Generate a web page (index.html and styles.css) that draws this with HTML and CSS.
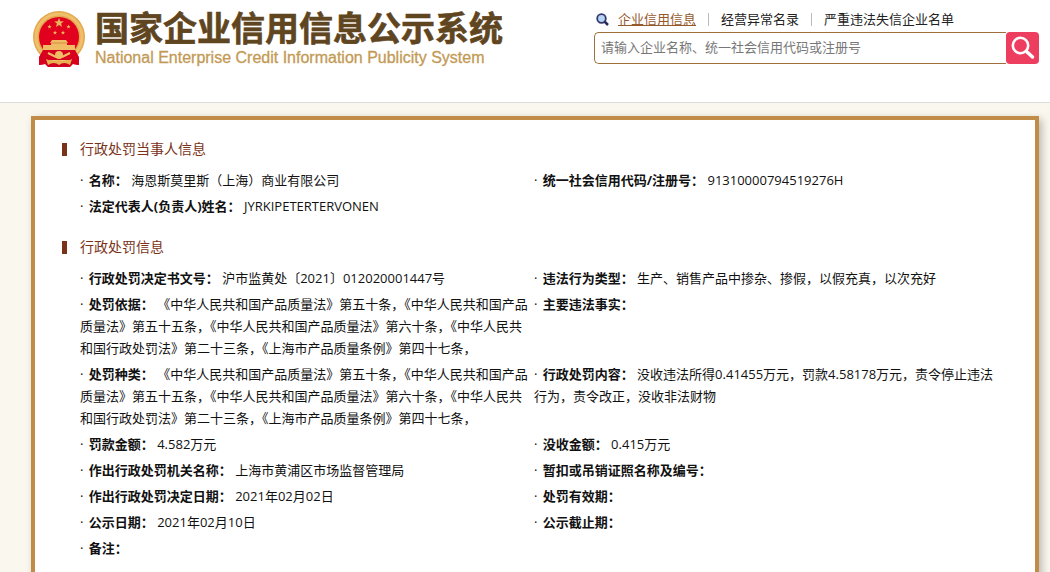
FILE: index.html
```html
<!DOCTYPE html>
<html lang="zh-CN">
<head>
    <meta charset="UTF-8">
    <meta name="viewport" content="width=device-width, initial-scale=1.0">
    <title>国家企业信用信息公示系统</title>
    <link rel="stylesheet" href="styles.css">
</head>
<body>
    <header class="header">
        <div class="logo">
            <svg class="emblem" viewBox="0 0 52 56" aria-hidden="true">
                <path d="M8 38 L6 54 L12 53 L15 56 L37 56 L40 53 L46 54 L44 38 Z" fill="#d2001f"/>
                <circle cx="26" cy="26" r="26" fill="#e3a84e"/>
                <circle cx="26" cy="26" r="23" fill="none" stroke="#efc06c" stroke-width="3"/>
                <circle cx="26" cy="26" r="20" fill="#e2001f"/>
                <path d="M26 7 l1.300 3.200 3.500 .2 -2.700 2.200 .9 3.400 -3 -1.900 -3 1.900 .9 -3.400 -2.700 -2.200 3.500 -.2z" fill="#e9b35a"/>
                <g fill="#e9b35a">
                    <path id="star" d="M16.500 13.500 l.6 1.400 1.500 .1 -1.200 1 .4 1.500 -1.300 -.8 -1.300 .8 .4 -1.500 -1.200 -1 1.500 -.1z"/>
                    <use href="#star" x="19"/>
                    <use href="#star" x="5.500" y="6"/>
                    <use href="#star" x="13.500" y="6"/>
                </g>
                <path d="M19 29 H33 L35 32 H34 V34 H42 V39 H10 V34 H18 V32 H17 Z" fill="#f0bd66"/>
                <path d="M18 32 H34" stroke="#d98a3a" stroke-width="1"/>
                <path d="M10 39 H42 L46 46 V54 L40 53 L37 49 H15 L12 53 L6 54 V46 Z" fill="#d8001f"/>
                <circle cx="26" cy="44" r="4" fill="#f0bd66"/>
                <path d="M13 48 Q20 52 26 49 Q32 52 39 48 L37 54 Q31 50 26 54 Q21 50 15 54 Z" fill="#e9ae50"/>
                <path d="M15 42 L23 46 M37 42 L29 46" stroke="#f0bd66" stroke-width="2"/>
            </svg>
            <div>
                <h1>国家企业信用信息公示系统</h1>
                <p class="subtitle">National Enterprise Credit Information Publicity System</p>
            </div>
        </div>
        <div class="search">
            <nav class="tabs">
                <svg class="tab-icon" viewBox="0 0 13 13" aria-hidden="true">
                    <path d="M8.500 8.500 L12 12" stroke="#2b2b5c" stroke-width="2.500"/>
                    <circle cx="5.500" cy="5.500" r="4.300" fill="#b5d5f0" stroke="#33386e" stroke-width="1.800"/>
                </svg>
                <a href="#" class="active">企业信用信息</a>
                <span class="line"></span>
                <a href="#">经营异常名录</a>
                <span class="line"></span>
                <a href="#">严重违法失信企业名单</a>
            </nav>
            <form class="search-box">
                <input type="text" aria-label="企业查询" placeholder="请输入企业名称、统一社会信用代码或注册号">
                <button type="submit" aria-label="搜索">
                    <svg viewBox="0 0 24 24" aria-hidden="true">
                        <circle cx="9.500" cy="9.500" r="7.700" fill="none" stroke="#fff" stroke-width="2.600"/>
                        <path d="M15.500 15.500 L21.500 21" stroke="#fff" stroke-width="3.500" stroke-linecap="round"/>
                    </svg>
                </button>
            </form>
        </div>
    </header>

    <main class="container">
        <section>
            <h2>行政处罚当事人信息</h2>
            <div class="info">
                <p>· <b>名称：</b> 海恩斯莫里斯（上海）商业有限公司</p>
                <p>· <b>统一社会信用代码/注册号：</b> 91310000794519276H</p>
                <p>· <b>法定代表人(负责人)姓名：</b> JYRKIPETERTERVONEN</p>
            </div>
        </section>
        <section>
            <h2>行政处罚信息</h2>
            <div class="info">
                <p>· <b>行政处罚决定书文号：</b> 沪市监黄处〔2021〕012020001447号</p>
                <p>· <b>违法行为类型：</b> 生产、销售产品中掺杂、掺假，以假充真，以次充好</p>
                <p>· <b>处罚依据：</b> 《中华人民共和国产品质量法》第五十条，《中华人民共和国产品质量法》第五十五条，《中华人民共和国产品质量法》第六十条，《中华人民共和国行政处罚法》第二十三条，《上海市产品质量条例》第四十七条，</p>
                <p>· <b>主要违法事实：</b></p>
                <p>· <b>处罚种类：</b> 《中华人民共和国产品质量法》第五十条，《中华人民共和国产品质量法》第五十五条，《中华人民共和国产品质量法》第六十条，《中华人民共和国行政处罚法》第二十三条，《上海市产品质量条例》第四十七条，</p>
                <p>· <b>行政处罚内容：</b> 没收违法所得0.41455万元，罚款4.58178万元，责令停止违法行为，责令改正，没收非法财物</p>
                <p>· <b>罚款金额：</b> 4.582万元</p>
                <p>· <b>没收金额：</b> 0.415万元</p>
                <p>· <b>作出行政处罚机关名称：</b> 上海市黄浦区市场监督管理局</p>
                <p>· <b>暂扣或吊销证照名称及编号：</b></p>
                <p>· <b>作出行政处罚决定日期：</b> 2021年02月02日</p>
                <p>· <b>处罚有效期：</b></p>
                <p>· <b>公示日期：</b> 2021年02月10日</p>
                <p>· <b>公示截止期：</b></p>
                <p>· <b>备注：</b></p>
            </div>
        </section>
    </main>
</body>
</html>
```
FILE: styles.css
```css
* {
    box-sizing: border-box;
    margin: 0;
    padding: 0;
}
body {
    display: flex;
    flex-direction: column;
    min-height: 100vh;
    font-family: "Open Sans", "Noto Sans CJK SC", sans-serif;
    font-size: 13px;
    line-height: 22px;
    color: #111;
    background: #faf7ee;
}
.header {
    display: flex;
    justify-content: space-between;
    padding: 8px 11px 34px 33px;
    background: #fff;
    border-bottom: 1px solid #ddd;
}
.logo {
    display: flex;
    gap: 10px;
}
.emblem {
    width: 52px;
    height: 56px;
    margin-top: 3px;
}
h1 {
    font-size: 34px;
    line-height: 40px;
    color: #5f4520;
    -webkit-text-stroke: 0.6px #5f4520;
    white-space: nowrap;
}
.subtitle {
    font-family: "Liberation Sans", Arial, sans-serif;
    font-size: 16px;
    line-height: 20px;
    color: #c39a55;
    -webkit-text-stroke: 0.3px #c39a55;
    white-space: nowrap;
}
.search {
    width: 445px;
}
.tabs {
    display: flex;
    align-items: center;
    height: 24px;
    padding: 0 0 2px 2px;
}
.tab-icon {
    width: 13px;
    height: 13px;
    margin-right: 9px;
}
.tabs a {
    color: #222;
    text-decoration: none;
}
.tabs .active {
    color: #955a2c;
    text-decoration: underline;
}
.line {
    width: 1px;
    height: 13px;
    margin: 0 12px;
    background: #bbb;
}
.search-box {
    display: flex;
    height: 32px;
}
.search-box input {
    flex: 1;
    padding: 0 6px 2px;
    border: 1px solid #a0703a;
    border-right: none;
    border-radius: 5px 0 0 5px;
    font: inherit;
    outline: none;
}
.search-box input::placeholder {
    color: #777;
}
.search-box button {
    width: 33px;
    border: none;
    border-radius: 4px;
    background: #ee3e5f;
    cursor: pointer;
}
.search-box svg {
    display: block;
    width: 24px;
    height: 24px;
    margin: 0 auto;
}
.container {
    flex: 1;
    margin: 13px 11px 0 31px;
    padding: 18px 27px 0;
    border: 4px solid #c08c48;
    border-bottom: none;
    background: #fff;
    box-shadow: 3px 3px 8px rgba(0, 0, 0, 0.25);
}
section {
    margin-bottom: 17px;
}
h2 {
    display: flex;
    align-items: center;
    gap: 13px;
    margin-bottom: 7px;
    font-size: 14px;
    font-weight: normal;
    color: #7a3318;
}
h2::before {
    content: "";
    width: 5px;
    height: 13px;
    background: #7a3318;
}
.info {
    display: grid;
    grid-template-columns: 37fr 38fr;
    column-gap: 4px;
    padding: 0 12px 0 18px;
}
.info p {
    padding: 2px 0;
}
.info b {
    margin-left: 2px;
}
```
